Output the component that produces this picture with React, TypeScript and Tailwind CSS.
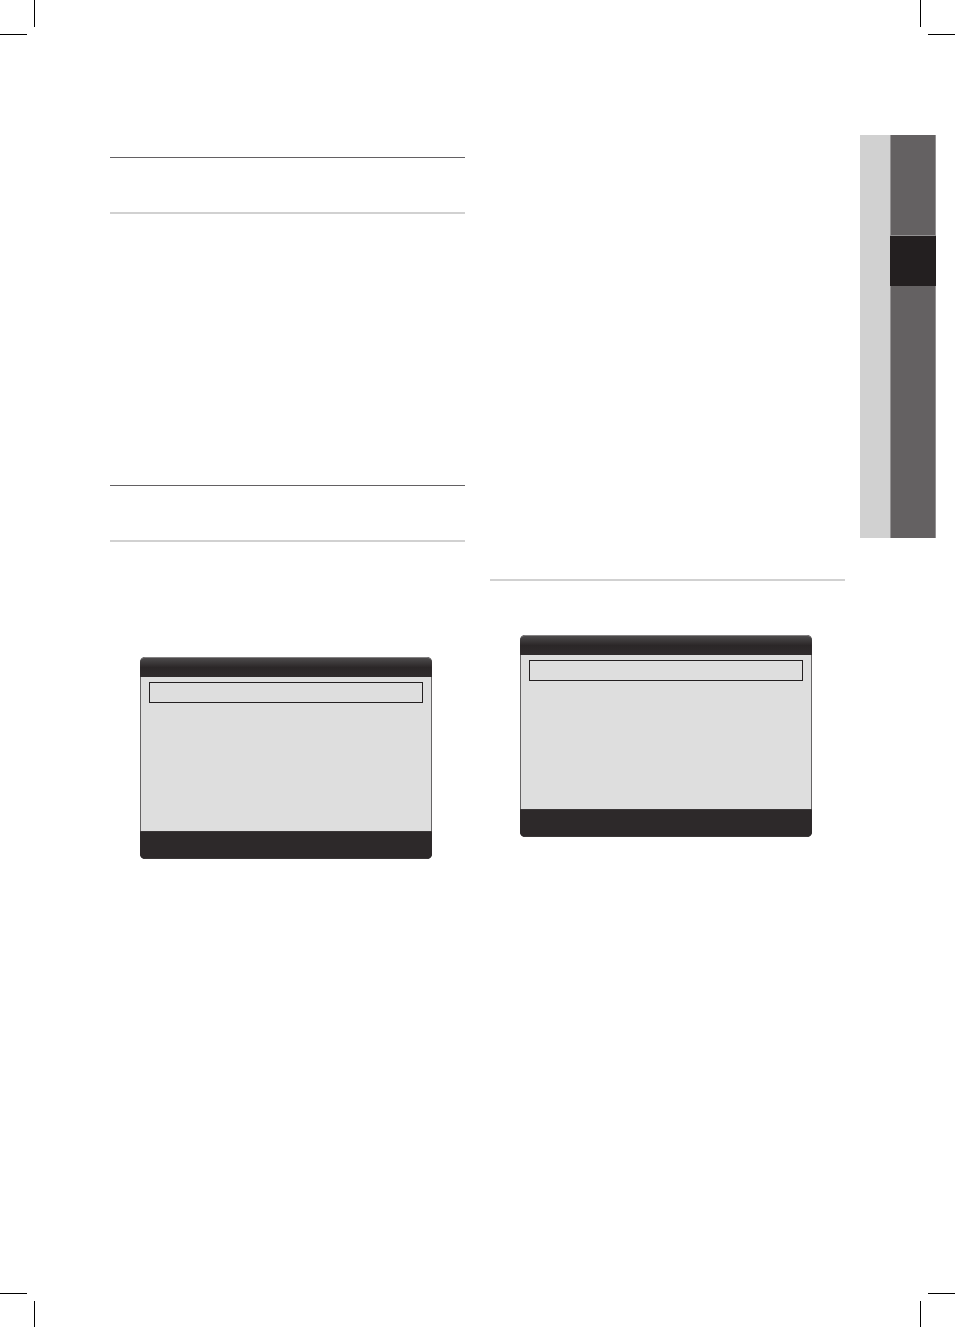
type Corner = "top-left" | "top-right" | "bottom-left" | "bottom-right"

const cropMarkPaths: Record<Corner, string> = {
  "top-left": "M34.5 0V27M0 34.5H27",
  "top-right": "M0.5 0V27M8 34.5H35",
  "bottom-left": "M34.5 34V8M0 0.5H27",
  "bottom-right": "M0.5 34V8M8 0.5H35",
}

function CropMark({ corner }: { corner: Corner }) {
  return (
    <svg
      aria-hidden="true"
      className="block"
      fill="none"
      height="35"
      shapeRendering="crispEdges"
      stroke="#000"
      viewBox="0 0 35 35"
      width="35"
    >
      <path d={cropMarkPaths[corner]} />
    </svg>
  )
}

function SectionHeading() {
  return (
    <div className="flex h-[57px] flex-col justify-between">
      <hr className="h-px border-0 bg-[#636163]" />
      <hr className="h-0.5 border-0 bg-[#d1d1d1]" />
    </div>
  )
}

function ScreenPanel() {
  return (
    <div className="mr-[33px] ml-[30px] flex h-[202px] flex-col overflow-hidden rounded-[5px] bg-[#2d292a]">
      <div className="h-5 rounded-t-[5px] border-[#858384] border-t bg-linear-to-b from-[#4d4b4c] via-[#2b2728] to-[#302c2d]" />
      <div className="flex-1 border-[#656364] border-x bg-[#dedede] px-2 pt-[5px]">
        <div className="h-[21px] border border-[#231f20]" />
      </div>
      <div className="h-7 border-[#3b3738] border-y bg-[#2d292a]" />
    </div>
  )
}

function SideTab() {
  return (
    <aside className="mt-[100px] ml-[15px] flex h-[403px] w-[76px] shrink-0">
      <div className="w-[30px] bg-[#d1d1d1]" />
      <div className="flex flex-1 flex-col">
        <div className="h-[101px] border-[#939192] border-x border-b bg-[#646162]" />
        <div className="h-[50px] bg-[#231f20]" />
        <div className="flex-1 border-[#939192] border-x bg-[#646162]" />
      </div>
    </aside>
  )
}

export default function App() {
  return (
    <div className="flex min-h-screen flex-col bg-white">
      <header className="flex h-[35px] justify-between overflow-hidden">
        <CropMark corner="top-left" />
        <CropMark corner="top-right" />
      </header>

      <main className="flex flex-1 items-start pr-[19px] pl-[110px]">
        <div className="grid flex-1 grid-cols-2 gap-[25px]">
          <section className="pt-[122px]">
            <SectionHeading />
            <div className="h-[271px]" />
            <SectionHeading />
            <div className="mt-[115px]">
              <ScreenPanel />
            </div>
          </section>

          <section className="pt-[544px]">
            <hr className="h-0.5 border-0 bg-[#d1d1d1]" />
            <div className="mt-[54px]">
              <ScreenPanel />
            </div>
          </section>
        </div>
        <SideTab />
      </main>

      <footer className="flex h-[34px] justify-between overflow-hidden">
        <CropMark corner="bottom-left" />
        <CropMark corner="bottom-right" />
      </footer>
    </div>
  )
}
